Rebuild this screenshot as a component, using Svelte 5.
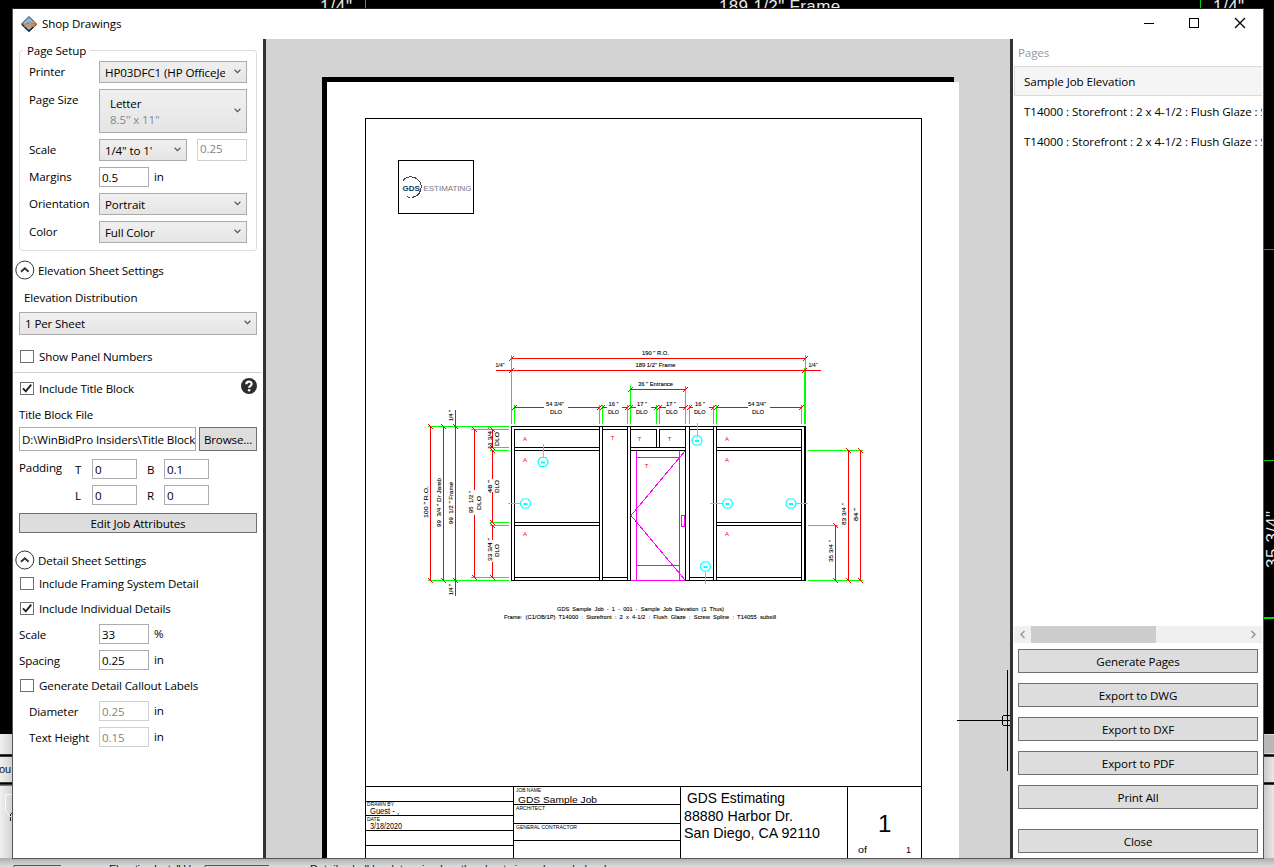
<script>
  const setup = [
    { label: 'Orientation', value: 'Portrait' },
    { label: 'Color', value: 'Full Color' }
  ];
  const pages = [
    'Sample Job Elevation',
    'T14000 : Storefront : 2 x 4-1/2 : Flush Glaze : Screw Spline',
    'T14000 : Storefront : 2 x 4-1/2 : Flush Glaze : Screw Spline'
  ];
  const actions = ['Generate Pages', 'Export to DWG', 'Export to DXF', 'Export to PDF', 'Print All'];

  // Straight segments: [x1, y1, x2, y2]
  const frame = [
    [511.5, 426, 511.5, 581], [514.5, 429, 514.5, 581], [599.5, 426, 599.5, 581], [602.5, 426, 602.5, 581],
    [627.5, 426, 627.5, 581], [630.5, 426, 630.5, 581], [656.5, 429, 656.5, 448], [659.5, 429, 659.5, 448],
    [685.5, 426, 685.5, 581], [689.5, 426, 689.5, 581], [713.5, 426, 713.5, 581], [716.5, 426, 716.5, 581],
    [801.5, 429, 801.5, 581], [804.5, 426, 804.5, 581], [805.5, 426, 805.5, 581],
    [511, 426.5, 806, 426.5], [514, 429.5, 600, 429.5], [602, 429.5, 628, 429.5], [630, 429.5, 657, 429.5],
    [659, 429.5, 686, 429.5], [689, 429.5, 714, 429.5], [716, 429.5, 802, 429.5],
    [514, 447.5, 600, 447.5], [514, 450.5, 600, 450.5], [630, 447.5, 686, 447.5], [630, 450.5, 686, 450.5],
    [716, 447.5, 802, 447.5], [716, 450.5, 802, 450.5],
    [514, 522.5, 600, 522.5], [514, 525.5, 600, 525.5], [716, 522.5, 802, 522.5], [716, 525.5, 802, 525.5],
    [514, 577.5, 600, 577.5], [602, 577.5, 628, 577.5], [689, 577.5, 714, 577.5], [716, 577.5, 802, 577.5],
    [511, 580.5, 631, 580.5], [685, 580.5, 806, 580.5]
  ];
  const green = [
    [511.5, 355, 511.5, 424], [805.5, 355, 805.5, 424], [804.5, 368, 804.5, 424],
    [630.5, 386, 630.5, 424], [685.5, 386, 685.5, 424],
    ...[514.5, 599.5, 602.5, 627.5, 656.5, 659.5, 689.5, 713.5, 716.5, 801.5].map((x) => [x, 405, x, 424]),
    [428, 426.5, 509, 426.5], [471, 429.5, 509, 429.5], [490, 447.5, 509, 447.5], [490, 450.5, 509, 450.5],
    [490, 522.5, 509, 522.5], [490, 525.5, 509, 525.5], [471, 577.5, 509, 577.5], [428, 580.5, 509, 580.5],
    [808, 450.5, 863, 450.5], [808, 525.5, 838, 525.5], [808, 580.5, 863, 580.5]
  ];
  const red = [
    [511, 358.5, 806, 358.5], [496, 370.5, 821, 370.5], [630, 389.5, 686, 389.5],
    [514, 407.5, 544, 407.5], [568, 407.5, 600, 407.5], [602, 407.5, 607, 407.5], [622, 407.5, 628, 407.5],
    [630, 407.5, 636, 407.5], [651, 407.5, 657, 407.5], [659, 407.5, 666, 407.5], [679, 407.5, 686, 407.5],
    [689, 407.5, 693, 407.5], [709, 407.5, 714, 407.5], [716, 407.5, 748, 407.5], [770, 407.5, 802, 407.5],
    [430.5, 426, 430.5, 581], [443.5, 426, 443.5, 581], [455.5, 410, 455.5, 596],
    [474.5, 429, 474.5, 490], [474.5, 515, 474.5, 578], [492.5, 429, 492.5, 448],
    [492.5, 450, 492.5, 479], [492.5, 492, 492.5, 523], [492.5, 525, 492.5, 540], [492.5, 562, 492.5, 578],
    [835.5, 525, 835.5, 581], [848.5, 450, 848.5, 581], [860.5, 450, 860.5, 581]
  ];
  const hTicks = [
    [511.5, 358.5], [805.5, 358.5], [511.5, 370.5], [804.5, 370.5], [630.5, 389.5], [685.5, 389.5],
    ...[514.5, 599.5, 602.5, 627.5, 630.5, 656.5, 659.5, 685.5, 689.5, 713.5, 716.5, 801.5].map((x) => [x, 407.5])
  ];
  const vTicks = [
    [430.5, 426.5], [443.5, 426.5], [455.5, 426.5], [474.5, 429.5], [492.5, 429.5], [492.5, 447.5], [492.5, 450.5],
    [492.5, 522.5], [492.5, 525.5], [492.5, 577.5], [474.5, 577.5], [430.5, 580.5], [443.5, 580.5], [455.5, 580.5],
    [835.5, 525.5], [848.5, 450.5], [860.5, 450.5], [835.5, 580.5], [848.5, 580.5], [860.5, 580.5]
  ];
  const sheetLines = [
    [365, 118.5, 922, 118.5], [365.5, 118, 365.5, 858], [921.5, 118, 921.5, 858], [365, 786.5, 922, 786.5],
    [513.5, 786, 513.5, 858], [680.5, 786, 680.5, 858], [847.5, 786, 847.5, 858],
    [365, 801.5, 514, 801.5], [365, 815.5, 514, 815.5], [365, 830.5, 514, 830.5], [365, 845.5, 514, 845.5],
    [513, 804.5, 681, 804.5], [513, 823.5, 681, 823.5], [513, 840.5, 681, 840.5]
  ];
  // Horizontal labels: [text, x, baseline, width]
  const dims = [
    ['190 " R.O.', 642, 355, 27], ['189 1/2" Frame', 635.5, 367, 40], ['36 " Entrance', 638, 386, 35],
    ['1/4"', 495.5, 367, 9], ['1/4"', 808.5, 367, 9],
    ['54 3/4"', 546, 406, 18], ['DLO', 550, 414, 12], ['16 "', 608.5, 406, 10], ['DLO', 608, 414, 11],
    ['17 "', 637, 406, 10], ['DLO', 636, 414, 11.5], ['17 "', 666, 406, 10], ['DLO', 666, 414, 11.5],
    ['16 "', 695, 406, 10], ['DLO', 694, 414, 11.5], ['54 3/4"', 748, 406, 18], ['DLO', 752, 414, 12],
    ['GDS  Sample  Job  -  1  -  001  -  Sample  Job  Elevation  (1  Thus)', 557, 611, 167],
    ['Frame:  (C1/OB/1P)  T14000  :  Storefront  :  2  x  4-1/2  :  Flush  Glaze  :  Screw  Spline  :  T14055  subsill', 504, 619, 272]
  ];
  // Rotated labels: [text, baseline x, lower end y, length]
  const vdims = [
    ['100 " R.O.', 428, 518, 32], ['99  3/4 " Dr Jamb', 440.5, 527, 49], ['99  1/2 " Frame', 453, 524, 42],
    ['95  1/2 "', 473, 513, 22], ['DLO', 480.5, 510, 14], ['46 "', 492, 493, 13], ['DLO', 499, 493, 13],
    ['33 3/4 "', 492, 561, 23], ['DLO', 499, 557, 13], ['11 3/4 "', 492, 449, 22], ['DLO', 499, 446, 14],
    ['1/4 "', 453, 421, 11], ['1/4 "', 453, 595, 11],
    ['35 3/4 "', 833, 562, 22], ['83 3/4 "', 845.5, 525, 22], ['84 "', 857.5, 521, 13]
  ];
  const marks = [
    ['A', 525, 439], ['A', 525, 460], ['A', 525, 534], ['T', 612.5, 438], ['T', 639.5, 439], ['T', 669.5, 439],
    ['T', 646.5, 466], ['A', 727, 439], ['A', 727, 460], ['A', 727, 534]
  ];
  // Callouts: centre and leader end
  const callouts = [
    [543, 462, 543.5, 444], [525.5, 503.5, 508, 503.5], [697, 440.5, 697.5, 423],
    [727.5, 503.5, 710, 503.5], [791, 503.5, 808, 503.5], [705.5, 566.5, 705.5, 584]
  ];
  // Title block: [text, x, baseline, width, size]
  const titles = [
    ['DRAWN BY', 367, 806, 27, 5], ['Guest - ,', 370, 814, 29, 8.5], ['DATE', 367, 821, 13, 5],
    ['3/18/2020', 370, 829, 32, 8.5], ['JOB NAME', 516, 792, 25, 5], ['GDS Sample Job', 518, 803, 79, 9.8],
    ['ARCHITECT', 516, 810, 29, 5], ['GENERAL CONTRACTOR', 516, 829, 61, 5],
    ['GDS Estimating', 687, 803, 98, 14.2], ['88880 Harbor Dr.', 684, 821, 109, 14.2],
    ['San Diego, CA 92110', 684, 838, 136, 14.2], ['of', 858, 853, 9, 9.5], ['1', 906, 853, 5, 9.5]
  ];
</script>

{#snippet chevron()}
  <svg class="chev" width="7" height="5" viewBox="0 0 7 5"><path d="M.6.8 3.5 3.6 6.4.8" /></svg>
{/snippet}

{#snippet combo(text, cls)}
  <div class="combo {cls}"><span>{text}</span>{@render chevron()}</div>
{/snippet}

{#snippet check(text, on)}
  <label class="check">
    <i>{#if on}<svg width="12" height="11" viewBox="0 0 12 11"><path d="M2 5.3 4.8 8.3 10.2 1.6" /></svg>{/if}</i>
    <span>{text}</span>
  </label>
{/snippet}

{#snippet expander(text)}
  <div class="expander">
    <svg width="20" height="20" viewBox="0 0 20 20"><circle cx="9.8" cy="10" r="9" /><path d="M6 11.8 9.8 8.2 13.6 11.8" /></svg>
    <span>{text}</span>
  </div>
{/snippet}

<main>
  <svg class="desk" width="1274" height="867" viewBox="0 0 1274 867">
    <defs>
      <linearGradient id="fade" x1="0" y1="0" x2="0" y2="1"><stop offset="0" stop-color="#adadad" /><stop offset="1" stop-color="#dedede" /></linearGradient>
      <linearGradient id="sideL" x1="0" y1="0" x2="1" y2="0"><stop offset="0" stop-color="#f0f0f0" /><stop offset="1" stop-color="#d0d0d0" /></linearGradient>
      <linearGradient id="sideR" x1="0" y1="0" x2="1" y2="0"><stop offset="0" stop-color="#c6c6c6" /><stop offset="1" stop-color="#e9e9e9" /></linearGradient>
    </defs>
    <rect width="1274" height="867" />
    <g class="cad">
      <text x="320" y="12" textLength="32">1/4"</text>
      <text x="719" y="12" textLength="121">189 1/2" Frame</text>
      <text x="1213" y="12" textLength="31">1/4"</text>
      <text transform="translate(1278 568) rotate(-90)" textLength="57">35 3/4"</text>
    </g>
    <path d="M365.5 0V9" stroke="#777" />
    <path d="M1200.5 0V9M1264 460.5H1274" stroke="#0c0" />
    <path d="M1264 618H1274" stroke="#0d0" stroke-width="2" />
    <path d="M1264 249.5H1274" stroke="#666" />
    <rect y="734" width="13" height="133" fill="url(#sideL)" />
    <rect x="1263" y="734" width="11" height="133" fill="url(#sideR)" />
    <rect x="1263" y="735" width="11" height="18" fill="#b8b8b8" />
    <rect y="858" width="1274" height="9" fill="url(#fade)" />
    <path d="M0 755.5H13M0 783.5H13M1263 755.5H1274M1263 783.5H1274" stroke="#000" stroke-width="2.500" />
    <path d="M13 785.5H0" stroke="#777" />
    <path d="M13 794.5H5.5V811L11 817" fill="none" stroke="#f8f8f8" />
    <path d="M10.500 815V816M10.500 817V821M10 815 13 812" stroke="#222" fill="none" />
    <text class="ui" x="-1" y="773">ou</text>
    <path d="M14 867V865.5H61M205 867V865.5H269" fill="none" stroke="#555" />
    <g class="ui"><text x="109" y="873" textLength="93">Elevation Install Use</text><text x="310" y="873" textLength="316">Details shall be determined on the sheet sizes shown below here</text></g>
  </svg>

  <section class="window">
    <header>
      <svg width="16" height="16" viewBox="0 0 16 16">
        <path d="M8 .5 15.5 8 8 15.5.5 8Z" fill="#8fb6e0" stroke="#283544" />
        <path d="M1 8.500 8 15 15 8.500" stroke="#18283b" stroke-width="1.5" fill="none" />
        <text x="2" y="11">v15</text>
      </svg>
      <h1>Shop Drawings</h1>
      <svg class="controls" width="104" height="12" viewBox="0 0 104 12"><path d="M0 6.5H10M45.500 1.500H54.500V10.500H45.500Z" shape-rendering="crispEdges" /><path stroke-width="1.300" d="M91 1 101 11M101 1 91 11" /></svg>
    </header>
    <div class="body">
      <aside class="left">
        <fieldset>
          <legend>Page Setup</legend>
          <div class="grid">
            <span>Printer</span>{@render combo('HP03DFC1 (HP OfficeJet Pro)', '')}
            <span class="top">Page Size</span>
            <div class="combo tall"><span>Letter<br /><em>8.5" x 11"</em></span>{@render chevron()}</div>
            <span>Scale</span>
            <div class="pair">{@render combo(`1/4" to 1'`, 'short')}<div class="box off big">0.25</div></div>
            <span>Margins</span><div class="unit"><div class="box">0.5</div>in</div>
            {#each setup as s}<span>{s.label}</span>{@render combo(s.value, '')}{/each}
          </div>
        </fieldset>
        <div class="exp1">{@render expander('Elevation Sheet Settings')}</div>
        <p class="dist">Elevation Distribution</p>
        {@render combo('1 Per Sheet', 'wide')}
        <div class="c1">{@render check('Show Panel Numbers', false)}</div>
        <hr />
        <div class="c2">
          {@render check('Include Title Block', true)}
          <svg width="16" height="16" viewBox="0 0 16 16"><circle cx="8" cy="8" r="8" fill="#2d2d2d" /><path d="M5.300 6.300C5.300 2.800 10.900 2.900 10.700 6 10.600 7.800 8.100 7.900 8.100 9.800" fill="none" stroke="#fff" stroke-width="2.200" /><circle cx="8.100" cy="12.300" r="1.300" fill="#fff" /></svg>
        </div>
        <p class="file">Title Block File</p>
        <div class="browse"><div class="box">D:\WinBidPro Insiders\Title Blocks</div><button>Browse...</button></div>
        <div class="pad">
          <span>Padding</span><b>T</b><div class="box">0</div><b>B</b><div class="box">0.1</div>
          <span></span><b>L</b><div class="box">0</div><b>R</b><div class="box">0</div>
        </div>
        <button class="edit">Edit Job Attributes</button>
        <div class="exp2">{@render expander('Detail Sheet Settings')}</div>
        <div class="c3">{@render check('Include Framing System Detail', false)}</div>
        <div class="c4">{@render check('Include Individual Details', true)}</div>
        <div class="rows"><span>Scale</span><div class="box">33</div>%</div>
        <div class="rows"><span>Spacing</span><div class="box">0.25</div>in</div>
        <div class="c5">{@render check('Generate Detail Callout Labels', false)}</div>
        <div class="rows sub"><span>Diameter</span><div class="box off">0.25</div>in</div>
        <div class="rows sub"><span>Text Height</span><div class="box off">0.15</div>in</div>
      </aside>

      <svg class="sheet" width="744" height="819" viewBox="266 39 744 819">
        <rect x="266" y="39" width="744" height="819" fill="#d3d3d3" />
        <rect x="322" y="77" width="632" height="781" />
        <rect x="327" y="82" width="632" height="776" fill="#fff" />
        <g class="crisp">
          {#each sheetLines as [a, b, c, d]}<line x1={a} y1={b} x2={c} y2={d} stroke="#000" />{/each}
          <rect x="398.500" y="160.500" width="75" height="53" fill="none" stroke="#000" />
          {#each green as [a, b, c, d]}<line x1={a} y1={b} x2={c} y2={d} stroke="#0f0" />{/each}
          {#each red as [a, b, c, d]}<line x1={a} y1={b} x2={c} y2={d} stroke="#f00" />{/each}
          {#each hTicks as [x, y]}<line x1={x - 2.5} y1={y + 2.5} x2={x + 2.5} y2={y - 2.5} stroke="#f00" />{/each}
          {#each vTicks as [x, y]}<line x1={x - 2.5} y1={y - 2.5} x2={x + 3} y2={y + 3} stroke="#f00" />{/each}
          {#each frame as [a, b, c, d]}<line x1={a} y1={b} x2={c} y2={d} stroke="#000" />{/each}
          <path d="M636.500 451V580M679.500 451V580M636 457.500H680M636 565.500H680M631 580.500H685M685 451 631 515.500 685 580M681.500 515.500H684.500V526.500H681.500Z" fill="none" stroke="#f0f" />
          {#each callouts as [x, y, ex, ey]}
            <line x1={ex === x || Math.abs(ex - x) < 1 ? ex : x + Math.sign(ex - x) * 5} y1={ey === y ? y : y + Math.sign(ey - y) * 5} x2={ex} y2={ey} stroke="#0ff" />
          {/each}
        </g>
        {#each callouts as [x, y]}
          <g transform="translate({x} {y})"><path d="M-2.500 -4.500H2.500L4.800 -1.500V1.500L2.500 4.500H-2.500L-4.800 1.500V-1.500Z" fill="none" stroke="#0ff" stroke-width="1.200" /><rect x="-2" y="-.5" width="4" height="2" fill="#0ff" /></g>
        {/each}
        <path class="crisp" d="M403 180.500A10.300 10.300 0 1 1 405 195.500" fill="none" stroke="#444" stroke-dasharray="40 2 3 2" />
        <text class="logo" x="402.500" y="191" textLength="17.500" lengthAdjust="spacingAndGlyphs">GDS</text>
        <text class="logo thin" x="423.500" y="190.500" textLength="48" lengthAdjust="spacingAndGlyphs">ESTIMATING</text>
        <g class="dim">
          {#each dims as [t, x, y, w]}<text {x} {y} textLength={w} lengthAdjust="spacingAndGlyphs">{t}</text>{/each}
          {#each vdims as [t, x, y, w]}<text transform="translate({x} {y}) rotate(-90)" textLength={w} lengthAdjust="spacingAndGlyphs">{t}</text>{/each}
        </g>
        {#each marks as [t, x, y]}<text class="mark" {x} y={y + 2}>{t}</text>{/each}
        {#each titles as [t, x, y, w, s]}<text {x} {y} textLength={w} lengthAdjust="spacingAndGlyphs" font-size={s}>{t}</text>{/each}
        <text x="878" y="832" font-size="24">1</text>
        <path class="crisp" d="M957 720.500H1002M1007.500 670V715M1007.500 726V771M1003 715.500H1010M1003 725.500H1010M1002.500 716V725M1003 720.500H1010M1007.500 715V726" fill="none" stroke="#000" />
      </svg>

      <aside class="right">
        <p>Pages</p>
        <ul>{#each pages as page, i}<li class:sel={i === 0}>{page}</li>{/each}</ul>
        <div class="scroll">
          <svg width="17" height="17" viewBox="0 0 17 17"><path d="M10.500 5 7 8.500 10.500 12" /></svg>
          <i></i>
          <svg width="17" height="17" viewBox="0 0 17 17"><path d="M6.500 5 10 8.500 6.500 12" /></svg>
        </div>
        <div class="actions">{#each actions as a}<button>{a}</button>{/each}<button class="close">Close</button></div>
      </aside>
    </div>
  </section>
</main>

<style>
  :global(body) { margin: 0; overflow: hidden; }
  main { position: relative; width: 1274px; height: 867px; overflow: hidden; background: #000; font: 11.6px/16px 'Open Sans', 'Noto Sans', sans-serif; letter-spacing: -0.13px; color: #000; }
  main * { box-sizing: border-box; }
  .desk { display: block; }
  .cad text { font: 17px 'Liberation Sans', sans-serif; fill: #e8e8e8; }
  .ui, .ui text { font: 11px 'Liberation Sans', sans-serif; fill: #111; }
  .window { position: absolute; left: 12px; top: 8px; width: 1252px; height: 851px; border: 1px solid #555; border-top-color: #222; background: #fff; }
  header { display: flex; align-items: center; height: 30px; padding: 0 17px 0 8px; }
  header text { font: bold 8px 'Liberation Sans', sans-serif; fill: #f59a35; stroke: #643a1a; stroke-width: 0.2px; letter-spacing: -0.5px; }
  h1 { flex: 1; margin: 0 0 0 5px; font-size: 11.6px; font-weight: 400; letter-spacing: -0.12px; }
  .controls { stroke: #000; fill: none; margin-top: -2px; margin-right: -2px; }
  .body { display: flex; height: 819px; }
  .left { width: 253px; padding-left: 6px; border-right: 3px solid #333; flex: none; }
  fieldset { position: relative; width: 238px; height: 201px; margin: 11px 0 0; padding: 11px 0 0 9px; border: 1px solid #d5dfe5; border-radius: 3px; }
  legend { position: absolute; left: 3px; top: -8px; padding: 0 4px; background: #fff; line-height: 16px; }
  .grid { display: grid; grid-template-columns: 70px 148px; gap: 6px 0; align-items: center; margin-top: -1px; }
  .grid > .top { align-self: start; position: relative; top: 3px; }
  .combo { display: flex; align-items: center; width: 148px; height: 22px; padding: 1px 5px 0 5px; border: 1px solid #acacac; background: linear-gradient(#f0f0f0, #e5e5e5); }
  .combo span { flex: 1; overflow: hidden; white-space: nowrap; margin-right: 9px; }
  .combo em { color: #888; font-style: normal; }
  .tall { height: 44px; padding-left: 10px; }
  .short { width: 88px; }
  .wide { width: 238px; height: 23px; }
  .chev { margin-top: -3px; fill: none; stroke: #555; stroke-width: 1.2; flex: none; }
  .pair { display: flex; justify-content: space-between; }
  .box { width: 50px; height: 20px; padding: 1px 0 0 2px; border: 1px solid #abadb3; background: #fff; line-height: 17px; white-space: nowrap; overflow: hidden; flex: none; }
  .box.big { height: 22px; line-height: 16px; }
  .off { color: #848484; border-color: #cfd0d3; }
  .unit { display: flex; align-items: center; gap: 5px; }
  .expander { display: flex; align-items: center; height: 20px; margin-left: -4px; gap: 3px; }
  .expander svg { fill: none; stroke: #333; }
  .expander path { stroke-width: 1.9; }
  .expander span { padding-top: 1px; }
  .exp1 { margin-top: 9px; }
  p { margin: 0; }
  .dist { margin: 10px 0 6px 5px; }
  .check { display: flex; align-items: center; gap: 5px; height: 13px; margin-left: 1px; }
  .check i { width: 14px; height: 13px; border: 1px solid #707070; }
  .check svg { display: block; fill: none; stroke: #212121; stroke-width: 1.9; }
  .c1 { margin-top: 15px; }
  hr { margin: 9px 0 0 -5px; width: 248px; height: 1px; border: 0; background: #d0d0d0; }
  .c2 { display: flex; justify-content: space-between; width: 238px; height: 22px; padding-top: 9px; }
  .c2 > svg { margin-top: -4px; }
  .file { margin: 12px 0 4px; }
  .browse { display: flex; gap: 3px; }
  .browse .box { width: 177px; height: 24px; padding-top: 3px; }
  button { height: 24px; padding: 1px 0 0; border: 1px solid #707070; background: #ddd; font: inherit; letter-spacing: inherit; color: #000; }
  .browse button { width: 58px; }
  .pad { display: grid; grid-template-columns: 56px 17px 55px 17px 45px; gap: 6px 0; margin-top: 8px; }
  .pad > span { padding-top: 1px; }
  .pad b { font-weight: 400; padding-top: 3px; }
  .pad .box { width: 45px; }
  .edit { display: block; width: 238px; height: 20px; margin-top: 8px; line-height: 18px; }
  .exp2 { margin-top: 17px; }
  .c3 { margin-top: 7px; }
  .c4 { margin: 12px 0 9px; }
  .rows { display: flex; align-items: center; height: 20px; margin-bottom: 6px; gap: 5px; }
  .rows span { width: 75px; padding-top: 1px; }
  .rows .box { margin-left: -5px; }
  .rows span { width: 80px; }
  .rows.sub span { width: 70px; }
  .sub { margin-left: 10px; }
  .c5 { margin: 9px 0; }
  .rows { gap: 5px; }
  .sheet { display: block; flex: none; font-family: 'Liberation Sans', sans-serif; letter-spacing: 0; }
  .crisp { shape-rendering: crispEdges; }
  .dim text { font-size: 6px; white-space: pre; stroke: #000; stroke-width: 0.1px; }
  .mark { font-size: 6px; fill: #f00; text-anchor: middle; }
  .logo { font-size: 8px; font-weight: bold; fill: #123a60; }
  .thin { font-size: 7.5px; font-weight: 400; fill: #777; }
  .right { width: 253px; border-left: 3px solid #333; padding: 6px 1px 0; flex: none; }
  .right p { padding-left: 4px; color: #999; height: 21px; }
  ul { margin: 0; padding: 0; list-style: none; height: 560px; letter-spacing: -0.06px; }
  li { height: 30px; padding: 7px 0 0 9px; border: 1px solid transparent; border-right: 0; white-space: nowrap; overflow: hidden; }
  .sel { background: #f5f5f5; border-color: #dadada; }
  .scroll { display: flex; height: 17px; background: #f0f0f0; justify-content: space-between; }
  .scroll i { width: 125px; background: #cdcdcd; margin-right: auto; }
  .scroll svg { fill: none; stroke: #999; stroke-width: 1.5; }
  .actions { display: flex; flex-direction: column; gap: 10px; padding: 6px 4px 0; }
  .actions .close { margin-top: 10px; }
</style>
